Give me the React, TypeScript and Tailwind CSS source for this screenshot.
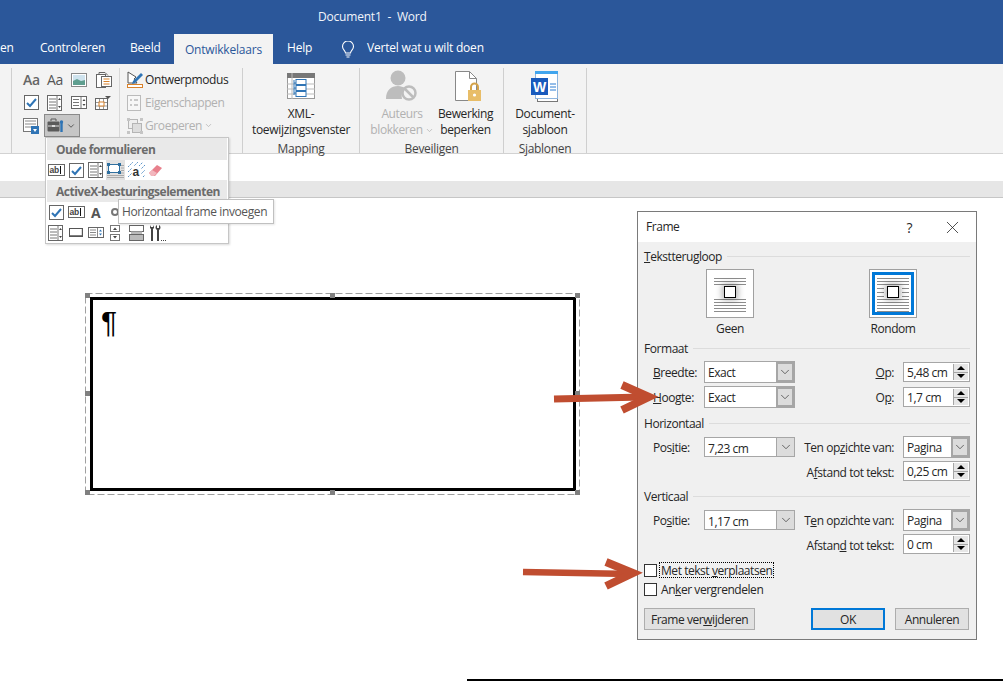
import type { ReactNode } from 'react';
import { ChevronDown, X } from 'lucide-react';

function Sv({ w = 16, h = 16, children }: { w?: number; h?: number; children: ReactNode }) {
  return (
    <svg width={w} height={h} viewBox={`0 0 ${w} ${h}`} fill="none" className="shrink-0">
      {children}
    </svg>
  );
}

const CheckIcon = () => (
  <Sv w={15} h={15}>
    <rect x="0.5" y="0.5" width="14" height="14" fill="#fff" stroke="#666" />
    <path d="M3 8l3 3 6-7" stroke="#2f74b5" strokeWidth="2" />
  </Sv>
);

const AbIcon = () => (
  <Sv w={17} h={12}>
    <rect x="0.5" y="0.5" width="16" height="11" fill="#fff" stroke="#666" />
    <text x="1.5" y="9" fontSize="8.5" fontWeight="600" fill="#444" fontFamily="Liberation Sans">ab</text>
    <path d="M12.5 2v8" stroke="#111" />
  </Sv>
);

const ListIcon = ({ w = 15 }: { w?: number }) => (
  <Sv w={w} h={16}>
    <rect x="0.5" y="0.5" width={w - 1} height="15" fill="#fff" stroke="#666" />
    <path d={`M${w - 5} 1v14M2 4h7M2 7h7M2 10h7M2 13h7`} stroke="#777" />
    <path d={`M${w - 4} 5l1.5-2 1.5 2zM${w - 4} 11l1.5 2 1.5-2z`} fill="#444" />
  </Sv>
);

const SpinListIcon = () => (
  <Sv w={16} h={13}>
    <rect x="0.5" y="0.5" width="15" height="12" fill="#fff" stroke="#666" />
    <path d="M10 1v11M2 3.5h6M2 6.5h6M2 9.5h6" stroke="#777" />
    <path d="M11.5 5l1.5-2 1.5 2zM11.5 8l1.5 2 1.5-2z" fill="#444" />
  </Sv>
);

const TableDropIcon = () => (
  <Sv w={16} h={14}>
    <rect x="0.5" y="2.5" width="12" height="11" fill="#fff" stroke="#666" />
    <path d="M4.5 3v10M8.5 3v10M1 6.5h11M1 10h11" stroke="#999" />
    <rect x="4" y="6" width="5" height="4" fill="#fff" stroke="#d9822b" />
    <path d="M10 0h6l-3 3z" fill="#555" />
  </Sv>
);

const ImageIcon = () => (
  <Sv w={16} h={14}>
    <rect x="0.5" y="0.5" width="15" height="13" fill="#fff" stroke="#888" />
    <rect x="2" y="2" width="12" height="10" fill="#cfe3ee" />
    <path d="M2 8l4-2 4 2 4-1v5H2z" fill="#5f9e8f" />
  </Sv>
);

const PasteIcon = () => (
  <Sv w={16} h={16}>
    <rect x="0.5" y="2.5" width="9" height="13" fill="#fff" stroke="#666" />
    <rect x="5.5" y="4.5" width="10" height="10" fill="#fff" stroke="#666" />
    <path d="M7.5 7h6M7.5 9.5h6M7.5 12h6" stroke="#d9822b" />
    <path d="M3 2.5V.5h6l3 3" stroke="#666" />
  </Sv>
);

const FormDropIcon = () => (
  <Sv w={16} h={16}>
    <rect x="0.5" y="0.5" width="14" height="13" fill="#fff" stroke="#777" />
    <path d="M2 3h11M2 6h11M2 9h6" stroke="#888" />
    <rect x="8" y="8" width="8" height="8" fill="#2f74b5" />
    <path d="M10 11h4l-2 3z" fill="#fff" />
  </Sv>
);

const ToolboxIcon = () => (
  <Sv w={17} h={15}>
    <rect x="0.5" y="3.5" width="12" height="10" rx="1" fill="#5a5a5a" />
    <path d="M4 3V1h5v2" stroke="#5a5a5a" />
    <path d="M1 8h11" stroke="#ddd" />
    <rect x="5" y="7" width="3" height="2" fill="#ddd" />
    <path d="M14.5 5v9" stroke="#2f74b5" strokeWidth="2.4" />
    <circle cx="14.5" cy="4" r="1.7" fill="#2f74b5" />
  </Sv>
);

const DesignIcon = () => (
  <Sv w={17} h={17}>
    <path d="M1 1l8 5-2 2 3 4H1z" fill="#fff" stroke="#555" />
    <path d="M6 10l8-8 2 2-8 8-3 1z" fill="#2f74b5" />
    <rect x="0.5" y="13.5" width="15" height="3" fill="#fff" stroke="#d9822b" />
  </Sv>
);

const PropsIcon = () => (
  <Sv w={14} h={16}>
    <rect x="0.5" y="0.5" width="13" height="15" fill="#f7f7f7" stroke="#bbb" />
    <path d="M3 5h2M7 5h4M3 10h2M7 10h4" stroke="#bbb" strokeWidth="1.5" />
  </Sv>
);

const GroupIcon = () => (
  <Sv w={16} h={16}>
    <rect x="1.5" y="1.5" width="9" height="9" fill="#eee" stroke="#b5b5b5" />
    <rect x="5.5" y="5.5" width="9" height="9" fill="#ddd" stroke="#b5b5b5" />
    <path d="M0 0h3v3H0zM13 0h3v3h-3zM0 13h3v3H0zM13 13h3v3h-3z" fill="#c5c5c5" />
  </Sv>
);

const FrameIcon = () => (
  <Sv w={17} h={15}>
    <path d="M0 12.5h17M0 14.5h17M14 2.5h3M14 5h3M14 7.5h3M14 10h3" stroke="#aaa" />
    <rect x="1.5" y="1.5" width="11" height="8" fill="#fff" stroke="#2f6f9f" />
    <path d="M0 0h3v3H0zM11 0h3v3h-3zM0 8h3v3H0zM11 8h3v3h-3z" fill="#2f6f9f" />
  </Sv>
);

const ShadeIcon = () => (
  <Sv w={17} h={16}>
    <path d="M0 5l5-5M0 10L10 0M0 15L15 0M5 15L17 3M10 15l7-7M15 15l2-2" stroke="#5b94c9" strokeDasharray="2 1" />
    <rect x="4" y="4" width="9" height="11" fill="#fff" />
    <text x="4.5" y="13.5" fontSize="12" fontWeight="700" fill="#333" fontFamily="Liberation Sans">a</text>
  </Sv>
);

const EraserIcon = () => (
  <Sv w={14} h={13}>
    <path d="M0 9l8-8 5 3-7 8H3z" fill="#e8808c" />
    <path d="M0 9l3-3 5 3-3 3H2z" fill="#f2b6bd" />
  </Sv>
);

const ButtonIcon = () => (
  <Sv w={14} h={9}>
    <rect x="0.5" y="0.5" width="13" height="8" fill="#fff" stroke="#555" strokeWidth="1" />
    <path d="M1 8h13M13.5 1v8" stroke="#555" strokeWidth="1.4" />
  </Sv>
);

const ListSpinIcon = () => (
  <Sv w={16} h={11}>
    <rect x="0.5" y="0.5" width="15" height="10" fill="#fff" stroke="#666" />
    <path d="M9.5 1v9M2 3h6M2 5.5h6M2 8h6" stroke="#888" />
    <path d="M11 4.5l1.5-2 1.5 2zM11 6.5l1.5 2 1.5-2z" fill="#2f74b5" />
  </Sv>
);

const SpinnerIcon = () => (
  <Sv w={10} h={16}>
    <rect x="0.5" y="0.5" width="9" height="6" fill="#fff" stroke="#777" />
    <rect x="0.5" y="9.5" width="9" height="6" fill="#fff" stroke="#777" />
    <path d="M3 5l2-2.5L7 5zM3 11l2 2.5L7 11z" fill="#444" />
  </Sv>
);

const ScrollIcon = () => (
  <Sv w={15} h={16}>
    <rect x="0.5" y="0.5" width="14" height="6" fill="#fff" stroke="#666" />
    <rect x="2" y="6.5" width="11" height="3" fill="#bbb" />
    <rect x="0.5" y="9.5" width="14" height="6" fill="#bbb" stroke="#666" />
  </Sv>
);

const ToolsIcon = () => (
  <Sv w={18} h={16}>
    <path d="M2 0v3l1 1v12h2V4l1-1V0L5 2H3z" fill="#444" />
    <path d="M9 0c-2 1-2 4 0 5v11h2V5c2-1 2-4 0-5v3H9z" fill="#444" />
    <path d="M13 15h1v1h-1zM15 15h1v1h-1zM17 15h1v1h-1z" fill="#444" />
  </Sv>
);

const MappingIcon = () => (
  <Sv w={28} h={26}>
    <rect x="0.5" y="0.5" width="27" height="25" fill="#fff" stroke="#999" />
    <rect x="0" y="0" width="28" height="5" fill="#777" />
    <path d="M0 11h28M0 16h28M0 21h28M5 0v26" stroke="#bbb" />
    <path d="M7 7v15M7 10h2M7 15h2M7 20h2" stroke="#2f74b5" />
    <rect x="9" y="6.5" width="10" height="5" fill="#fff" stroke="#2f74b5" />
    <rect x="9" y="12.5" width="10" height="5" fill="#fff" stroke="#2f74b5" />
    <rect x="9" y="18.5" width="10" height="5" fill="#fff" stroke="#2f74b5" />
  </Sv>
);

const BlockIcon = () => (
  <Sv w={32} h={32}>
    <circle cx="12" cy="8" r="7.5" fill="#bdbdbd" />
    <path d="M0 29c0-9 5-13 12-13 3 0 5 1 7 2a12 12 0 0 0-3 11z" fill="#bdbdbd" />
    <circle cx="23" cy="23" r="6.5" fill="#f3f3f3" stroke="#bdbdbd" strokeWidth="2.5" />
    <path d="M18.5 18.5l9 9" stroke="#bdbdbd" strokeWidth="2.5" />
  </Sv>
);

const RestrictIcon = () => (
  <Sv w={27} h={31}>
    <path d="M0.5 0.5h14l7 7v22H0.5z" fill="#fff" stroke="#888" />
    <path d="M14.5 0.5v7h7" stroke="#888" />
    <rect x="13" y="19" width="13" height="11" fill="#e8bd68" />
    <path d="M16 19v-3a3.5 3.5 0 0 1 7 0v3" stroke="#d3a24a" strokeWidth="2" />
    <circle cx="19.5" cy="24" r="1.6" fill="#fff" />
  </Sv>
);

const WordIcon = () => (
  <Sv w={28} h={31}>
    <rect x="6.5" y="3.5" width="20" height="27" fill="#fff" stroke="#777" />
    <rect x="4.5" y="0.5" width="22" height="27" fill="#fff" stroke="#8db4de" />
    <rect x="4" y="0" width="23" height="3" fill="#41a5ee" />
    <rect x="0" y="7" width="17" height="17" fill="#185abd" />
    <text x="2" y="21" fontSize="14" fontWeight="700" fill="#fff" fontFamily="Liberation Sans">W</text>
    <path d="M19 13h6M19 16h6M19 19h6" stroke="#2b7cd3" />
  </Sv>
);

const BulbIcon = () => (
  <Sv w={14} h={17}>
    <path d="M4.5 12c0-2-3-3.5-3-6.5a5.5 5.5 0 0 1 11 0c0 3-3 4.500-3 6.500z" stroke="#fff" strokeWidth="1.1" />
    <path d="M4.500 14h5M5.500 16h3" stroke="#fff" />
  </Sv>
);

const WrapTile = ({ active }: { active?: boolean }) => (
  <div className="w-[48px] h-[49px] bg-white border border-[#a0a0a0] p-[2px]">
    <div className={`relative w-full h-full border-[3px] ${active ? 'border-[#0078d7]' : 'border-transparent'}`}>
      <svg width="36" height="37" viewBox="0 0 36 37" fill="none">
        {[3.5, 6.5, 9.5, 24.5, 27.5, 30.5, 33.5, 36.5].map((y) => (
          <path key={y} d={`M2 ${y}h32`} stroke="#8c8c8c" />
        ))}
        {active && <path d="M2 13.500h7M27 13.500h7M2 17.500h7M27 17.500h7M2 21.500h7M27 21.500h7" stroke="#8c8c8c" />}
      </svg>
      <div className="absolute left-[12px] top-[11px] w-[12px] h-[12px] bg-white border border-black shadow-[0_0_6px_2px_rgba(0,0,0,0.3)]" />
    </div>
  </div>
);

const Combo = ({ value, thick, w = 'w-[91px]', h = 'h-[22px]' }: { value: string; thick?: boolean; w?: string; h?: string }) => (
  <div className={`${w} ${h} flex bg-white border border-[#a6a6a6] overflow-hidden`}>
    <span className="flex-1 pl-[3px] leading-[22px]">{value}</span>
    <span className={`w-[18px] flex items-center justify-center bg-[#dcdcdc] ${thick ? 'border-2 border-[#a6a6a6]' : 'border-l border-[#a6a6a6]'}`}>
      <ChevronDown size={14} strokeWidth={1.2} className="text-[#333]" />
    </span>
  </div>
);

const Spin = ({ value }: { value: string }) => (
  <div className="w-[67px] h-[20px] flex bg-white border border-[#a6a6a6] overflow-hidden">
    <span className="flex-1 pl-[3px] leading-[20px]">{value}</span>
    <span className="w-[15px] mr-[1px] my-[1px] flex flex-col bg-[#e6e6e6] border-l border-[#a6a6a6]">
      <span className="flex-1 flex items-center justify-center border-b border-[#a6a6a6]">
        <span className="w-0 h-0 border-x-[4px] border-x-transparent border-b-[4px] border-b-black" />
      </span>
      <span className="flex-1 flex items-center justify-center">
        <span className="w-0 h-0 border-x-[4px] border-x-transparent border-t-[4px] border-t-black" />
      </span>
    </span>
  </div>
);

const Legend = ({ children, className = '' }: { children: ReactNode; className?: string }) => (
  <div className={`flex items-center gap-[5px] h-[16px] ${className}`}>
    <span className="pt-[2px] leading-[16px]">{children}</span>
    <span className="flex-1 h-px bg-[#dcdcdc]" />
  </div>
);

const Header = ({ children }: { children: ReactNode }) => (
  <div className="h-[22px] bg-[#e9e9e9] pl-[9px] leading-[23px] font-bold text-[#6b6b6b] whitespace-nowrap tracking-[-0.5px]">{children}</div>
);

const RibbonButton = ({ icon, children, muted }: { icon: ReactNode; children: ReactNode; muted?: boolean }) => (
  <div className="flex flex-col items-center">
    <div className="h-[36px] flex items-center">{icon}</div>
    <div className={`mt-[2px] text-center leading-[16px] ${muted ? 'text-[#b1b1b1]' : ''}`}>{children}</div>
  </div>
);

export default function App() {
  return (
    <div className="relative w-[1003px] h-[681px] overflow-hidden bg-white text-[12px] text-[#262626] font-['Open_Sans',sans-serif] tracking-[-0.3px]">
      <div className="h-[64px] bg-[#2b579a] text-white tracking-[-0.2px]">
        <div className="h-[34px] pl-[318px] leading-[34px] text-[#f2f5fa]">Document1&nbsp; -&nbsp; Word</div>
        <div className="h-[30px] flex items-end leading-[32px]">
          <span className="w-[40px]">en</span>
          <span className="w-[90px]">Controleren</span>
          <span className="w-[44px]">Beeld</span>
          <span className="w-[99px] h-[30px] bg-[#f3f3f3] text-center text-[#2b579a]">Ontwikkelaars</span>
          <span className="ml-[14px] w-[54px]">Help</span>
          <span className="h-[30px] w-[26px] flex items-center"><BulbIcon /></span>
          <span>Vertel wat u wilt doen</span>
        </div>
      </div>

      <div className="h-[90px] bg-[#f3f3f3] border-b border-[#d2d2d2] flex pl-[11px] pt-[4px]">
        <div className="w-[232px] h-[85px] flex border-x border-[#cfcfcf]">
          <div className="w-[107px] pl-[11px]">
            <div className="flex items-center h-[23px]">
              <span className="w-[16px] text-[14px] font-semibold text-[#666] leading-none">Aa</span>
              <span className="w-[16px] ml-[8px] text-[14px] text-[#555] leading-none">Aa</span>
              <span className="ml-[8px]"><ImageIcon /></span>
              <span className="ml-[9px]"><PasteIcon /></span>
            </div>
            <div className="flex items-center h-[23px] pl-[1px]">
              <CheckIcon />
              <span className="ml-[8px]"><ListIcon /></span>
              <span className="ml-[9px]"><SpinListIcon /></span>
              <span className="ml-[8px]"><TableDropIcon /></span>
            </div>
            <div className="flex items-center h-[23px]">
              <FormDropIcon />
              <div className="w-[36px] h-[23px] ml-[5px] flex items-center gap-[2px] pl-[2px] bg-[#c6c6c6] border border-[#8a8a8a]">
                <ToolboxIcon />
                <ChevronDown size={10} strokeWidth={2} className="text-[#444]" />
              </div>
            </div>
          </div>
          <div className="w-px h-[73px] bg-[#d8d8d8]" />
          <div className="pl-[7px] flex flex-col tracking-[-0.4px]">
            <div className="h-[23px] flex items-center gap-[1px]"><DesignIcon /><span>Ontwerpmodus</span></div>
            <div className="h-[23px] flex items-center gap-[4px] text-[#b1b1b1]"><PropsIcon /><span>Eigenschappen</span></div>
            <div className="h-[23px] flex items-center gap-[2px] text-[#b1b1b1]"><GroupIcon /><span>Groeperen</span><ChevronDown size={9} /></div>
          </div>
        </div>
        <div className="w-[117px] h-[85px] border-r border-[#cfcfcf] flex flex-col items-center">
          <RibbonButton icon={<MappingIcon />}>XML-<br />toewijzingsvenster</RibbonButton>
          <div className="leading-[20px] mt-[1px] text-[#444]">Mapping</div>
        </div>
        <div className="w-[144px] h-[85px] border-r border-[#cfcfcf] flex flex-col items-center">
          <div className="flex w-full pl-[10px] tracking-[-0.4px]">
            <div className="w-[64px]">
              <RibbonButton muted icon={<BlockIcon />}>
                Auteurs<br /><span className="inline-flex items-center">blokkeren<ChevronDown size={9} className="ml-[2px]" /></span>
              </RibbonButton>
            </div>
            <div className="w-[57px] ml-[3px]">
              <RibbonButton icon={<span className="ml-[6px]"><RestrictIcon /></span>}>Bewerking<br />beperken</RibbonButton>
            </div>
          </div>
          <div className="leading-[20px] mt-[1px] text-[#444]">Beveiligen</div>
        </div>
        <div className="w-[83px] h-[85px] border-r border-[#cfcfcf] flex flex-col items-center">
          <RibbonButton icon={<WordIcon />}>Document-<br />sjabloon</RibbonButton>
          <div className="leading-[20px] mt-[1px] text-[#444]">Sjablonen</div>
        </div>
      </div>

      <div className="h-[27px]" />
      <div className="h-[17px] bg-[#e6e6e6] border-b border-[#c6c6c6]" />

      {/* gereedschapsmenu */}
      <div className="absolute left-[45px] top-[137px] w-[184px] h-[107px] bg-white border border-[#c6c6c6] shadow-[1px_1px_2px_rgba(0,0,0,0.15)] px-px">
        <Header>Oude formulieren</Header>
        <div className="h-[20px] flex items-center pl-[1px]">
          <AbIcon />
          <span className="ml-[4px]"><CheckIcon /></span>
          <span className="ml-[4px]"><ListIcon /></span>
          <span className="w-[19px] h-[20px] ml-[3px] bg-[#e1e1e1] flex items-center justify-center"><FrameIcon /></span>
          <span className="ml-[3px]"><ShadeIcon /></span>
          <span className="ml-[4px]"><EraserIcon /></span>
        </div>
        <Header>ActiveX-besturingselementen</Header>
        <div className="h-[20px] flex items-center pl-[2px]">
          <CheckIcon />
          <span className="ml-[4px]"><AbIcon /></span>
          <span className="text-[14px] font-bold text-[#555] w-[12px] ml-[6px]">A</span>
          <span className="w-[8px] h-[8px] rounded-full border-2 border-[#777] ml-[8px]" />
        </div>
        <div className="h-[21px] flex items-center pl-[1px]">
          <ListIcon />
          <span className="ml-[6px]"><ButtonIcon /></span>
          <span className="ml-[5px]"><ListSpinIcon /></span>
          <span className="ml-[6px]"><SpinnerIcon /></span>
          <span className="ml-[9px]"><ScrollIcon /></span>
          <span className="ml-[4px]"><ToolsIcon /></span>
        </div>
      </div>
      <div className="absolute left-[118px] top-[199px] w-[156px] h-[25px] bg-white border border-[#c0c0c0] shadow-[1px_1px_2px_rgba(0,0,0,0.1)] pl-[3px] leading-[23px] text-[#555] whitespace-nowrap tracking-[-0.4px]">
        Horizontaal frame invoegen
      </div>

      {/* frame in het document */}
      <div className="absolute left-[85px] top-[293px] w-[495px] h-[202px]">
        <svg className="absolute left-0 top-0" width="495" height="202" fill="none">
          <rect x="0.5" y="0.5" width="494" height="201" stroke="#a0a0a0" strokeDasharray="7 3" />
        </svg>
        <div className="absolute left-[5px] top-[4px] w-[486px] h-[194px] border-[3px] border-black pl-[7px]">
          <div className="text-[30px] leading-[40px] font-['Liberation_Sans',sans-serif] text-black mt-[2px] ml-[1px]">¶</div>
        </div>
        {[
          'left-0 top-0', 'left-[245px] top-0', 'right-0 top-0',
          'left-0 top-[98px]', 'right-0 top-[98px]',
          'left-0 bottom-0', 'left-[245px] bottom-0', 'right-0 bottom-0',
        ].map((c) => (
          <span key={c} className={`absolute ${c} w-[5px] h-[5px] bg-[#808080]`} />
        ))}
      </div>

      <div className="absolute left-[467px] top-[679px] w-[536px] h-[2px] bg-black" />

      {/* dialoog */}
      <div className="absolute left-[637px] top-[211px] w-[340px] h-[429px] bg-[#f0f0f0] border border-[#7a7a7a] tracking-[-0.45px]">
        <div className="h-[30px] bg-white flex items-center pl-[8px]">
          <span className="flex-1">Frame</span>
          <span className="text-[14px] mr-[30px]">?</span>
          <X size={21} strokeWidth={0.9} className="mr-[13px] text-[#222]" />
        </div>
        <div className="px-[6px] pt-[6px]">
          <Legend><u>T</u>ekstterugloop</Legend>
          <div className="flex mt-[5px] pl-[62px] gap-[115px]">
            <div className="flex flex-col items-center w-[48px]">
              <WrapTile />
              <span className="leading-[18px] mt-[2px]">Geen</span>
            </div>
            <div className="flex flex-col items-center w-[48px]">
              <WrapTile active />
              <span className="leading-[18px] mt-[2px]">Rondom</span>
            </div>
          </div>
          <Legend className="mt-[2px]">Formaat</Legend>
          <div className="flex items-center mt-[5px] h-[22px]">
            <span className="w-[60px] pl-[9px] pt-[2px]"><u>B</u>reedte:</span>
            <Combo value="Exact" thick />
            <span className="flex-1 text-right pr-[9px] pt-[2px]"><u>O</u>p:</span>
            <Spin value="5,48 cm" />
          </div>
          <div className="flex items-center mt-[3px] h-[22px]">
            <span className="w-[60px] pl-[9px] pt-[2px]"><u>H</u>oogte:</span>
            <Combo value="Exact" thick />
            <span className="flex-1 text-right pr-[9px] pt-[2px]">O<u>p</u>:</span>
            <Spin value="1,7 cm" />
          </div>
          <Legend className="mt-[7px]">Horizontaal</Legend>
          <div className="flex items-center mt-[5px] h-[22px]">
            <span className="w-[60px] pl-[9px] pt-[2px]">Pos<u>i</u>tie:</span>
            <Combo value="7,23 cm" h="h-[20px]" />
            <span className="flex-1 text-right pr-[9px] pt-[2px]">Ten op<u>z</u>ichte van:</span>
            <Combo value="Pagina" thick w="w-[67px]" />
          </div>
          <div className="flex items-center justify-end mt-[3px] h-[20px]">
            <span className="pr-[9px] pt-[4px]">A<u>f</u>stand tot tekst:</span>
            <Spin value="0,25 cm" />
          </div>
          <Legend className="mt-[7px]">Verticaal</Legend>
          <div className="flex items-center mt-[5px] h-[22px]">
            <span className="w-[60px] pl-[9px] pt-[2px]">Po<u>s</u>itie:</span>
            <Combo value="1,17 cm" h="h-[20px]" />
            <span className="flex-1 text-right pr-[9px] pt-[2px]">T<u>e</u>n opzichte van:</span>
            <Combo value="Pagina" thick w="w-[67px]" />
          </div>
          <div className="flex items-center justify-end mt-[3px] h-[20px]">
            <span className="pr-[9px] pt-[4px]">Afstan<u>d</u> tot tekst:</span>
            <Spin value="0 cm" />
          </div>
          <div className="flex items-center mt-[8px] h-[16px]">
            <span className="w-[13px] h-[13px] bg-white border border-[#333]" />
            <span className="ml-[2px] px-px h-[16px] leading-[16px] border border-dotted border-black">Met tekst <u>v</u>erplaatsen</span>
          </div>
          <div className="flex items-center mt-[3px] h-[16px]">
            <span className="w-[13px] h-[13px] bg-white border border-[#333]" />
            <span className="ml-[4px] pt-[2px]">An<u>k</u>er vergrendelen</span>
          </div>
          <div className="flex mt-[11px] h-[22px] leading-[22px] text-center">
            <span className="w-[111px] bg-[#e1e1e1] border border-[#adadad]">Frame ver<u>w</u>ijderen</span>
            <span className="w-[74px] ml-[56px] bg-[#e1e1e1] border-2 border-[#0078d7] leading-[20px]">OK</span>
            <span className="w-[74px] ml-[10px] bg-[#e1e1e1] border border-[#adadad]">Annuleren</span>
          </div>
        </div>
      </div>

      {/* pijlen */}
      <svg className="absolute left-0 top-0" width="1003" height="681" fill="none">
        <path d="M554 399l90-2" stroke="#c04d30" strokeWidth="7" />
        <path d="M622 385l27 12-27 13" stroke="#c04d30" strokeWidth="8" />
        <path d="M523 572l108 2" stroke="#c04d30" strokeWidth="6.500" />
        <path d="M606 562l27 11-27 13" stroke="#c04d30" strokeWidth="8" />
      </svg>
    </div>
  );
}
